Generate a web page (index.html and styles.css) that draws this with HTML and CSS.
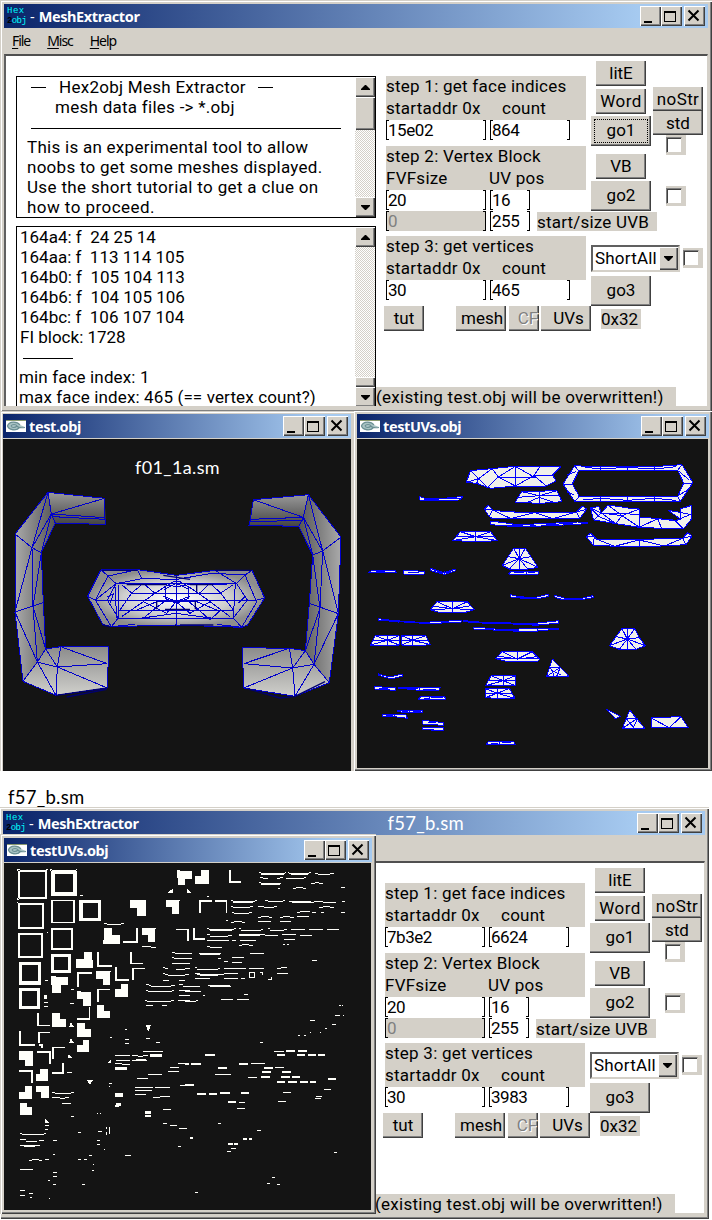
FILE: index.html
```
<!DOCTYPE html>
<html lang="en">
<head>
<meta charset="utf-8">
<title>MeshExtractor</title>
<link rel="stylesheet" href="styles.css">
</head>
<body>
<svg class="defs" width="0" height="0">
  <symbol id="min" viewBox="0 0 21 20"><path d="M4 15h8v2H4z"/></symbol>
  <symbol id="max" viewBox="0 0 21 20"><path fill-rule="evenodd" d="M3 5h12v11H3zM4 7h10v8H4z"/></symbol>
  <symbol id="close" viewBox="0 0 21 20"><path fill="none" stroke="#000" stroke-width="2" d="M4.500 4.500l10 10M14.500 4.500l-10 10"/></symbol>
  <symbol id="eye" viewBox="0 0 20 12"><path fill="#fff" d="M0 0h20v12H0z"/><path fill="#8a9a70" d="M0 0h20v1H0z"/><path fill="#a9c3c4" d="M1 6c2-5 10-5 13-1l5 2-5 1c-4 4-11 3-13-2z"/><path fill="none" stroke="#6b8f93" stroke-width="1.200" d="M14 5C11 1 3 1 1.500 6 3 10 10 11 13 8M5 6c1-2 5-2 6 0s4 2 8 1.500M5 6c1 2 4 2 6 0"/></symbol>
  <symbol id="up" viewBox="0 0 9 5"><path d="M4 0h1l4 4v1H0V4z"/></symbol>
  <symbol id="down" viewBox="0 0 9 5"><path d="M0 0h9v1L5 5H4L0 1z"/></symbol>
</svg>

<main class="desktop">
  <section class="window main first">
    <header class="titlebar">
      <span class="logo"><span class="hexa">Hex</span><span><i>2</i>obj</span></span>
      <h1 class="title"><span class="dash">-</span> MeshExtractor</h1>
      <div class="caption"><span class="cap"><svg><use href="#min"/></svg></span><span class="cap"><svg><use href="#max"/></svg></span><span class="cap last"><svg><use href="#close"/></svg></span></div>
    </header>
    <nav class="menu"><span><u>F</u>ile</span><span><u>M</u>isc</span><span><u>H</u>elp</span></nav>
    <div class="client">
      <div class="texts">
        <div class="textbox info">
          <div class="lines">
            <p class="l1"><b class="em"></b><span>Hex2obj Mesh Extractor</span><b class="em"></b></p>
            <p class="l2">mesh data files -&gt; *.obj</p>
            <p><b class="rule long"></b></p>
            <p class="t4">This is an experimental tool to allow</p>
            <p class="t5">noobs to get some meshes displayed.</p>
            <p class="t6">Use the short tutorial to get a clue on</p>
            <p class="t7">how to proceed.</p>
          </div>
          <div class="scroll"><span class="sb"><svg><use href="#up"/></svg></span><span class="thumb"></span><span class="sb end"><svg><use href="#down"/></svg></span></div>
        </div>
        <div class="textbox log">
          <div class="lines">
            <p>164a4: f&nbsp; 24 25 14</p><p>164aa: f&nbsp; 113 114 105</p><p>164b0: f&nbsp; 105 104 113</p><p>164b6: f&nbsp; 104 105 106</p><p>164bc: f&nbsp; 106 107 104</p><p>FI block: 1728</p>
            <p><b class="rule short"></b></p>
            <p class="minf">min face index: 1</p><p class="maxf">max face index: 465 (== vertex count?)</p>
          </div>
          <div class="scroll"><span class="sb"><svg><use href="#up"/></svg></span><span class="thumb low"></span><span class="sb"><svg><use href="#down"/></svg></span></div>
        </div>
      </div>
      <div class="controls">
        <div class="top">
          <div class="steps">
            <div class="step"><p class="s1">step 1: get face indices</p><p class="addr"><span>startaddr 0x</span><span>count</span></p></div>
            <div class="fields"><span class="field">15e02</span><span class="field mid">864</span></div>
            <div class="step two"><p class="s2">step 2: Vertex Block</p><p class="fvf"><span>FVFsize</span><span>UV pos</span></p></div>
            <div class="fields"><span class="field">20</span><span class="field small">16</span></div>
            <div class="fields second"><span class="field off">0</span><span class="field small">255</span><span class="tag uvb">start/size UVB</span></div>
            <div class="step three"><p class="s3">step 3: get vertices</p><p class="addr"><span>startaddr 0x</span><span>count</span></p></div>
            <div class="fields"><span class="field">30</span><span class="field mid">465</span></div>
          </div>
          <div class="actions">
            <span class="btn">litE</span><span class="btn word">Word</span><span class="btn go g1 focus">go1</span><span class="btn vb">VB</span><span class="btn go g2">go2</span>
            <span class="select"><span>ShortAll</span><span class="drop"><svg><use href="#down"/></svg></span></span>
            <span class="btn go g3">go3</span>
          </div>
          <div class="side"><span class="btn nostr">noStr</span><span class="btn std">std</span><span class="check c1"><i></i></span><span class="check c2"><i></i></span><span class="check c3"><i></i></span></div>
        </div>
        <div class="bottom"><span class="btn tut">tut</span><span class="btn mesh">mesh</span><span class="btn cf">CF</span><span class="btn uvs">UVs</span><span class="tag hex">0x32</span></div>
        <p class="tag note">(existing test.obj will be overwritten!)</p>
      </div>
    </div>
  </section>

  <section class="window view test">
    <header class="titlebar">
      <svg class="eye"><use href="#eye"/></svg><h2 class="title">test.obj</h2>
      <div class="caption"><span class="cap"><svg><use href="#min"/></svg></span><span class="cap"><svg><use href="#max"/></svg></span><span class="cap last"><svg><use href="#close"/></svg></span></div>
    </header>
    <svg class="canvas" viewBox="9 -3 1044 996" width="348" height="332">
      <defs>
        <linearGradient id="gl" x1="0" x2="1" y1="0" y2="0"><stop offset="0" stop-color="#aaa"/><stop offset="1" stop-color="#555"/></linearGradient>
        <linearGradient id="gr" x1="1" x2="0" y1="0" y2="0"><stop offset="0" stop-color="#aaa"/><stop offset="1" stop-color="#555"/></linearGradient>
        <linearGradient id="gd" x1="0" x2="0" y1="0" y2="1"><stop offset="0" stop-color="#999"/><stop offset="1" stop-color="#444"/></linearGradient>
        <linearGradient id="gb" x1="0" x2="0" y1="0" y2="1"><stop offset="0" stop-color="#8b8b8b"/><stop offset="1" stop-color="#d0d0cc"/></linearGradient>
        <radialGradient id="gc"><stop offset="0" stop-color="#fff"/><stop offset=".6" stop-color="#cfcfcf"/><stop offset="1" stop-color="#8d8d8d"/></radialGradient>
      </defs>
      <path fill="url(#gl)" d="M144 157L45 282V516L69 724L112 666L137 627L130 488L124 338L166 250L154 222z"/>
      <path fill="url(#gd)" d="M144 157L314 175L317 253L166 250L154 222z"/>
      <path fill="url(#gb)" d="M137 627L182 620L326 621L322 744L168 766L69 724L112 666z"/>
      <path fill="url(#gr)" d="M925 164L1023 291L1015 521L988 728L942 673L916 632L928 490L938 345L896 259L910 232z"/>
      <path fill="url(#gd)" d="M925 164L760 179L747 256L896 259L910 232z"/>
      <path fill="url(#gb)" d="M916 632L868 625L727 623L731 744L885 769L988 728L942 673z"/>
      <path fill="url(#gc)" d="M303 389L412 389L530 406L645 391L756 391L794 474L742 556L725 562L528 555L334 560L308 553L263 469z"/>
      <g fill="none" stroke="#0000cd" stroke-width="3" shape-rendering="crispEdges">
        <path d="M144 157L314 175V232L317 253L166 250L124 338L130 488L137 627L182 620L326 621L322 744L168 766L69 724L45 516V282zM144 157L154 222L314 175M154 222L314 233M154 222L166 250M154 222L96 323L144 157M154 222L124 338L96 323L45 282M96 323L45 516L130 488M96 323L99 500L112 666L137 627L172 681L322 671L182 620L172 681L168 766L112 666L69 724M99 500L137 627M45 516L112 666M172 681L322 744M112 666L172 681M158 230L317 238M124 338L99 500"/>
        <path d="M925 164L760 179L751 238L747 256L896 259L938 345L928 490L916 632L868 625L727 623L731 744L885 769L988 728L1015 521L1023 291zM925 164L910 232L760 179M910 232L751 238M910 232L896 259M910 232L968 333L925 164M910 232L938 345L968 333L1023 291M968 333L1015 521L928 490M968 333L960 505L942 673L916 632L878 684L731 671L868 625L878 684L885 769L942 673L988 728M938 345L960 505M1015 521L942 673L878 684L731 744M910 240L751 246M916 632L960 505"/>
        <path d="M303 389L412 389L530 406L645 391L756 391L794 474L742 556L725 562L528 555L334 560L308 553L263 469zM303 389L324 408L286 480L334 560L355 534L700 534L725 562L770 486L735 405L756 391M324 408L412 389L426 416L530 418L637 400L735 405L710 431L348 431L324 408M348 431L286 480L263 469M286 480H770L794 474M348 431L322 480L355 534M710 431L742 480L700 534M528 405V556M348 431L426 416M710 431L645 391M365 434L395 459L430 430L465 460L495 440M565 440L597 461L630 430L662 459L700 434M395 459H662M355 434V530M345 440L350 534M706 430L700 534M395 459L360 510H700L662 459M430 535L460 510L500 480M560 480L597 510L630 540L662 510M465 460L430 485M597 461L630 485M365 530L430 485L500 520L528 485L570 520L630 485L690 530"/>
        <path d="M495 440L520 425H540L565 440V475L530 490L495 475zM492 448L528 430L568 448M490 468L530 485L570 468M410 510L470 485H590L650 510M420 535L528 520L640 535M380 434L470 430L530 440L590 430L680 434M334 560L405 553M650 553L725 562M322 470L340 462L330 490M735 470L715 490"/>
      </g>
      <path fill="none" stroke="#000070" stroke-width="4" d="M168 766L322 744M200 771L320 748M745 747L840 774L885 769L975 725M306 391H412M645 391H755M490 406L570 418M380 434H500M570 434H640M590 436V455M470 484V508M586 484V508M495 508H570M308 555L330 560M540 555H640"/>
      <text class="label" x="405" y="101" textLength="254">f01_1a.sm</text>
    </svg>
  </section>

  <section class="window view uvs1">
    <header class="titlebar">
      <svg class="eye"><use href="#eye"/></svg><h2 class="title">testUVs.obj</h2>
      <div class="caption"><span class="cap"><svg><use href="#min"/></svg></span><span class="cap"><svg><use href="#max"/></svg></span><span class="cap last"><svg><use href="#close"/></svg></span></div>
    </header>
    <svg class="canvas" viewBox="3 -3 1053 987" width="351" height="329">
      <g fill="#f0f0eb" stroke="#00f" stroke-width="3" shape-rendering="crispEdges" stroke-linejoin="bevel">
        <path d="M331 127L343 92L408 86L475 79L614 80L590 105L600 123L571 138L478 138L404 145L362 130z"/>
        <path d="M497 155L603 152L618 185L555 190L477 187z"/>
        <path fill-rule="evenodd" d="M621 132L656 77L734 81L895 80L978 74L1011 128L973 184H656zM649 132L668 93L734 91L895 92L965 91L983 129L965 170L895 168L670 169z"/>
        <path d="M191 169L203 174L255 176L321 169L311 180L210 181H192z"/>
        <path d="M385 208L397 196L410 210L445 215L534 218L662 216L680 198L692 207L673 234L600 236L534 237L408 235L400 230z"/>
        <path d="M404 245H420L470 252L534 252L665 246H694V251L620 255L535 259L450 258L404 254z"/>
        <path d="M313 275H404L424 302L372 305L290 302z"/>
        <path d="M473 325H508L546 382L515 387H460L439 376z"/>
        <path d="M38 398L50 390H116L122 399zM143 391L205 394V402H143zM223 385L265 398L298 387L300 392L266 403L223 392zM458 402L466 394H546V402z"/>
        <path d="M463 464L490 470L534 473L576 463V470L540 477L500 475L464 471zM596 466L625 474L680 474L711 467V473L675 479L620 479L597 472z"/>
        <path d="M703 203L729 200L736 219L756 195L817 204L850 207V231L940 239L960 241L975 238L936 211L973 217V207L1007 196L1008 235L982 267L936 266L850 262L780 251L713 240z"/>
        <path d="M691 290L704 279L721 297L850 298L980 295L995 278L1008 288L990 314L920 318L780 319L711 315z"/>
        <path d="M243 485H334L355 509L325 518L245 516L223 509z"/>
        <path d="M67 536L116 542L190 547L256 545L316 540V546L258 549L190 549L67 541zM323 542L390 548L465 549L530 551L608 542V549L538 556L510 553L390 550L323 545zM353 561L418 567H490L608 564V567L545 573L470 573L353 567z"/>
        <path d="M58 587H129V615H43zM137 587H209L223 614L170 618L137 615z"/>
        <path d="M798 566H836L850 593L868 617L840 628H790L760 617L780 590z"/>
        <path d="M438 635H529L551 657L545 664L450 664L418 656z"/>
        <path d="M589 657L639 709H572z"/>
        <path d="M405 707H478V737H389zM389 746L460 745L477 775L430 777L389 772z"/>
        <path d="M67 701L85 707L101 711L140 702V708L105 717L68 706zM55 740L118 743V751L85 749L55 747zM126 741L190 743L253 743L249 751L190 751L127 744zM187 777L195 769H265L270 777z"/>
        <path d="M125 810L200 812V817L165 819L125 815zM79 824H150L154 835L115 830H79zM200 841L263 848V856L200 852zM200 863H262V873L200 868zM391 913L397 905H474L478 913z"/>
        <path d="M751 808L794 829L778 836zM821 810L866 865H799zM887 833L975 830L997 863H887z"/>
      </g>
      <g fill="none" stroke="#00f" stroke-width="3" shape-rendering="crispEdges">
        <path d="M343 92L368 116L331 127M362 130L368 116L408 86L427 111L394 143L368 116M427 111L478 79V138L427 111H534L478 79M478 138L534 107L550 82M590 105L534 107L571 138"/>
        <path d="M497 155L550 167L603 152M550 152V190M485 172L550 167L609 168M515 187L550 172L595 188"/>
        <path d="M621 132H649M656 77L668 93M978 74L965 91M983 129H1011M656 184L670 169M973 184L965 170M734 81V91M815 80V91M895 80V92M734 169V183M815 169V183M895 169V183M632 105L660 95M632 155L655 165M680 80L730 87L815 82L895 87L960 80M680 180L734 175L815 181L895 175L960 181M970 95L1000 120M970 165L1002 145"/>
        <path d="M203 177H250M262 176H311M385 208H410L400 230M410 210L465 236L534 218M536 218L590 236L662 216L670 234M662 216L690 208M440 256H500M570 254L650 250M623 251V258M450 251L540 256"/>
        <path d="M313 275L359 290L404 275M359 275V305M302 289H413M290 302L359 290L424 302M473 325L490 356L508 325M490 325V387M455 350L490 356L525 350M439 376L490 356L546 382M460 387L490 356L515 387"/>
        <path d="M60 395H84M90 396H112M86 390V399M155 397H190M265 394V402M475 398H505M510 393V402M515 397H538M630 477H680M485 472H525M235 390L260 399M270 399L290 391"/>
        <path d="M703 203L736 219L850 223M756 195L798 227L850 207M736 219L713 240M736 219L798 227L850 262M736 219L780 251L798 227M850 231V262M850 262L905 236L917 266M905 236L958 242L982 267M958 242L1007 222M973 217V240M973 217L1008 225M703 203L729 230L780 251"/>
        <path d="M691 290H715L711 315M721 297L775 319L850 300V319M850 300L925 318L980 295L990 314M980 295L1008 288"/>
        <path d="M289 485V518M243 485L289 506L334 485M232 499L289 506L345 497M223 509L289 506L355 509M128 540V548M256 542V549M100 541L190 547M391 546V553M463 546V553M510 554L550 552M412 564V573M545 566V573M425 570H490"/>
        <path d="M94 587V615M58 587L94 601L129 587M50 601H129M43 615L94 601L129 615M170 587V618M137 587L170 601L209 587M137 601H217M137 615L170 601L223 614"/>
        <path d="M814 567V628M798 566L814 597L836 566M780 590L814 597L850 593M760 617L814 597L868 617M790 628L814 597L840 628M484 635V660M438 635L484 657L529 635M425 648L484 657L542 650M418 656H551"/>
        <path fill="#00f" d="M811 593h7v8h-7z"/>
        <path d="M583 682H613L572 709M583 682L595 709M613 682L602 709M585 690L615 705M442 707V737M405 707L442 722L478 707M397 721H478M389 737L442 722L478 737M424 746V775M389 746L424 760L460 745M389 760H467M389 772L424 760L477 775"/>
        <path d="M70 745H95M150 744H185M190 743V751M200 748H240M203 774H218M221 769V777M226 773H260M137 813H155M160 810V818M170 815H195M90 827H110M115 823V832M215 847H240M215 868H235M405 910H425M430 905V913M437 908H465"/>
        <path d="M810 835H845L799 865M810 835L835 865M845 835L830 865M887 835L940 863L975 830"/>
      </g>
    </svg>
  </section>

  <p class="caption-label">f57_b.sm</p>

  <section class="window main second-win">
    <header class="titlebar">
      <span class="logo"><span class="hexa">Hex</span><span><i>2</i>obj</span></span>
      <h1 class="title"><span class="dash">-</span> MeshExtractor</h1>
      <span class="file">f57_b.sm</span>
      <div class="caption"><span class="cap"><svg><use href="#min"/></svg></span><span class="cap"><svg><use href="#max"/></svg></span><span class="cap last"><svg><use href="#close"/></svg></span></div>
    </header>
    <div class="menu"></div>
    <div class="client">
      <div class="texts"></div>
      <div class="controls">
        <div class="top">
          <div class="steps">
            <div class="step"><p class="s1">step 1: get face indices</p><p class="addr"><span>startaddr 0x</span><span>count</span></p></div>
            <div class="fields"><span class="field">7b3e2</span><span class="field mid">6624</span></div>
            <div class="step two"><p class="s2">step 2: Vertex Block</p><p class="fvf"><span>FVFsize</span><span>UV pos</span></p></div>
            <div class="fields"><span class="field">20</span><span class="field small">16</span></div>
            <div class="fields second"><span class="field off">0</span><span class="field small">255</span><span class="tag uvb">start/size UVB</span></div>
            <div class="step three"><p class="s3">step 3: get vertices</p><p class="addr"><span>startaddr 0x</span><span>count</span></p></div>
            <div class="fields"><span class="field">30</span><span class="field mid">3983</span></div>
          </div>
          <div class="actions">
            <span class="btn">litE</span><span class="btn word">Word</span><span class="btn go g1">go1</span><span class="btn vb">VB</span><span class="btn go g2">go2</span>
            <span class="select"><span>ShortAll</span><span class="drop"><svg><use href="#down"/></svg></span></span>
            <span class="btn go g3">go3</span>
          </div>
          <div class="side"><span class="btn nostr">noStr</span><span class="btn std">std</span><span class="check c1"><i></i></span><span class="check c2"><i></i></span><span class="check c3"><i></i></span></div>
        </div>
        <div class="bottom"><span class="btn tut">tut</span><span class="btn mesh">mesh</span><span class="btn cf">CF</span><span class="btn uvs">UVs</span><span class="tag hex">0x32</span></div>
        <p class="tag note">(existing test.obj will be overwritten!)</p>
      </div>
    </div>
  </section>

  <section class="window view uvs2">
    <header class="titlebar">
      <svg class="eye"><use href="#eye"/></svg><h2 class="title">testUVs.obj</h2>
      <div class="caption"><span class="cap"><svg><use href="#min"/></svg></span><span class="cap"><svg><use href="#max"/></svg></span><span class="cap last"><svg><use href="#close"/></svg></span></div>
    </header>
    <svg class="canvas" viewBox="12 9 1101 1041" width="367" height="347" shape-rendering="crispEdges">
      <g fill="#fffffa" fill-rule="evenodd">
        <path d="M54 30h87v87h-87zM60 36v75h75v-75zM51 27h9v6h-9zM138 27h6v3h-6zM51 114h6v6h-6zM153 30h78v78h-78zM165 42v54h54v-54zM150 27h6v6h-6zM228 27h3v6h-3zM54 129h78v78h-78zM60 135v66h66v-66zM153 120h72v69h-72zM159 123v63h60v-63zM237 120h66v63h-66zM249 129v45h45v-45zM54 219h75v75h-75zM60 225v63h63v-63zM153 204h66v66h-66zM159 210v54h54v-54zM153 282h60v57h-60zM162 291v39h42v-39zM57 306h66v69h-66zM66 315v48h48v-48zM57 384h63v63h-63zM66 393v45h45v-45z"/>
        <path d="M390 120h48v48h-27v-24h-21zM498 120h42v3h-3v39h-21v-21h-18zM531 30h9v3h36v24h-21v18h-21zM603 30h24v42h-42v-24h18zM312 204h24v21h24v27h-51v-12h3zM426 204h42v3h-3v39h-21v-21h-18zM252 276h24v24h3v24h-51v-27h24zM288 333h45v3h-3v39h-21v-18h-21zM153 348h15v3h36v24h-21v24h-27zM363 372h21v39h-39v-24h18zM231 393h12v3h30v42h-24v-21h-18zM291 435h21v18h18v21h-39zM156 459h24v18h18v24h-42zM231 489h24v18h18v24h-42zM249 540h18v36h-36v-21h18zM57 573h42v45h-24v-18h-18zM120 627h24v36h-36v-21h12zM75 678h21v39h-39v-21h18zM108 678h39v36h-24v-18h-15zM60 729h21v12h15v24h-36z"/>
        <path d="M207 501l6-15 3 6 6 9zM207 549l6-15 3 6 6 9zM261 660h18l-9 15zM438 495h15l-3 9-3 9h-3zM321 609l6-6 6-3v9zM135 789v-12l6 3 6 9zM204 585l9 3 3 6h-12zM504 99l6-9 9-3v12zM561 99v-12l12 9v3zM117 552h12v12h-6v-6h-6zM132 405h9v12h-9zM345 699h24v12h-24zM348 729h15v9h-6v3h-12v-6h3zM435 753h18v9h-18zM435 765h18v6h-18zM345 621h36v9h-36zM450 582h36v9h-36z"/>
      </g>
      <g fill="none" stroke="#fffffa" stroke-width="5">
        <path d="M411 204v42h-42M690 30v36h33M528 208h36v34M294 276v42h42M393 276v34h36M276 338h-42v43M348 321v38h39M435 325h-36v34M330 388h-36v38M268 441v36h-36M114 459v37h36M60 513v42h45M150 517h-33v32M111 576h38v36M195 562h-37v36M57 633h39v35M188 609v30h-32M600 160v-38h36M645 122h34v36M582 204v32h33"/>
      </g>
      <g fill="none" stroke="#fffffa" stroke-width="3">
        <path d="M240 106h9M51 127h3M141 217h3M312 190h9m0 2h42m0-2h9M426 260h27m0 3h15M135 361h9M213 388h9M210 430h12M132 427h12M132 439h12M201 637h15M516 278h9m0 3h45M516 292h6m0 3h42M516 310h54M489 323h6m0 3h9m24 3h28m0-3h14M489 340h6m0 3h9m0 3h51m0-3h9M489 361h18m30 0h18M438 374h9m0 3h6m0 3h60m0-3h12M438 392h6m0 3h72m0-3h6M537 374h12m0 4h21M537 392h33M537 407h33M435 422h6m0 3h73m0-4h9m10 0h37M438 437h21m42 0h-15M375 509h6M375 539h12M375 550h12M330 532h6M438 536h12M468 547h12M429 575h60M396 586h18m0 3h15m0-2h15M345 587h45M348 600h42M345 610h20m0 4h24M396 600h45M408 599h30M534 611h33M510 623h27M504 635h33M444 644h42M411 654h33M540 676h30M405 683h54m6 0h45M405 692h50M405 703h33M459 712h21m0-2h30M489 747h24M489 789h12M510 797h21m6 8h24M534 858h9M327 670h9M327 680h3M156 698h9m0 3h48m0-3h9M156 713h24m0 2h15m0-2h12M186 730h27M213 769h9M135 796h12M135 808h9M60 821h6m0 3h67m0-3h5M60 838h18m0 6h33m6-3h15M60 856h60M72 859h33M159 842h12M159 884h6M87 901h9m0-2h20m0 2h10M135 899h12M60 928h39M159 937h12M159 949h12M144 961h6M159 973h9M60 991h15M60 1006h15M87 1000h12M90 1012h6M147 1015h3M234 817h9M294 814h12M291 760h3m6 0h3M319 801v6m0 9v9M328 801v21M291 842h9M291 853h9M312 867h3M234 898h9m9 0h9M267 886h9M375 886h18M279 912h3M276 931h6M246 973h9M620 109h6"/>
        <g transform="translate(555 0)">
          <path d="M222 38h6m0 3h72m0-3h3m6 0h4m0 3h58m0-3h6m12 3h9m0 2h36m0-3h12M225 52h9m0 3h14m28 0h10m0-3h8m10 3h54m0-3h6M222 68h6m0 2h6m0 3h38m0-3h16m90 0h12m0-3h12m0 3h11M279 84h6m40 1h8m0-2h20m0 2h10M468 82h12M138 121h6m0 3h66m0-3h6m24 0h9m0 4h46m0-3h6m12 2h15m0 3h60m0-3h27m0 3h39m18-3h9M138 140h6m0 3h51m0-3h9m16-1h16m0 4h30m0-3h9m128 3h12m0-3h20m0 2h12M141 156h6m0 3h46m0-2h8M336 156h10m0-2h28M381 156h12m14 0h9M468 158h12M219 172h10m0-3h24m0 3h8m24 0h10m0-3h20m0 3h12M336 170h36M124 181h6M138 187h10m0-3h24m0 3h8m40-3h38M285 184h33M66 206h6m0 3h75m0-3h5m10 0h6m0 4h60m0-3h6m15-2h6m0 5h42m0-3h10m10 0h12m0 2h30m12 0h42m12 0h36M66 224h10m0 4h54m0-3h12m20-2h12m0 4h46m0-3h20m0 3h40m10-3h42m12 2h36M66 242h66m10-2h12m10 0h48m84-2h34M66 258h10m0 3h36m50-5h10m0-3h20m0 3h12M294 253h6m6 0h6M0 281h20m22-1h66m88-1h40M0 296h20m80-2h8m34-1h36M117 305h12m12 2h30M381 301h15M0 326h12m18-3h6m0 4h62m0-3h6m12 1h66m10-1h46M275 324h12m0-2h18M0 342h12m18-2h14m0 5h54m0-3h18m2-1h42M276 339h34M30 356h44m42 0h42m10-1h12M0 379h46m24-4h8m0 3h60M0 394h48M0 406h10m44 0h6M177 403h12M0 424h32m0-3h6m70-2h36m12 0h36M462 436h6m3 0h3M450 466h15m9 0h3M375 481h15M441 493h12M420 505h6M375 517h3m27 0h3M339 526h6m12 0h6M225 547h9M99 790h9M0 805h6M216 811h12M138 865h15M126 874h12M447 877h9M261 952h9M246 970h9M276 973h9M30 997h9M90 643h48M198 610h42M156 745h24M279 724h24M390 715h18M393 709h18M417 688h21M294 698h24M270 622h27M267 573h30"/>
          <path stroke-width="5" d="M228 43h70M318 43h50M228 71h58M145 126h60M320 125h58M387 124h24M75 211h65M168 211h55M162 225h64M45 281h60M117 325h60M35 343h64M35 328h60M75 377h60M60 585h30M303 573h27M339 573h27M276 585h24M336 585h24M369 585h24M399 585h21M0 611h12M18 611h30M162 612h27M99 624h27M237 624h27M231 636h27M291 636h27M189 652h27M228 651h27M288 651h27M321 651h24M276 666h24M309 666h27M345 666h24M375 666h18M429 657h24M0 674h27M36 701h27M72 701h24M105 699h30M168 699h24M129 726h24M162 727h18M129 852h15M147 852h12M174 836h12M15 833h9M192 836h9"/>
          <path d="M194 338h14v14h-14zM224 338h8v8M250 357h9v-6"/>
        </g>
      </g>
    </svg>
  </section>
</main>
</body>
</html>
```

FILE: styles.css
```
* { box-sizing: border-box; }
body { margin: 0; background: #fff; }
p, h1, h2 { margin: 0; font: inherit; white-space: pre; }
.defs { position: absolute; }
.desktop { position: relative; width: 712px; height: 1220px; overflow: hidden; font: 17px/20px Roboto, sans-serif; color: #000; }

/* windows */
.window { position: absolute; display: flex; flex-direction: column; background: #d4d0c8; box-shadow: inset 1px 1px #d4d0c8, inset 2px 2px #fff, inset -1px -1px #404040, inset -2px -2px #808080; }
.first { left: 0; top: 0; width: 712px; height: 412px; padding: 4px 4px 0; }
.second-win { left: -1px; top: 807px; width: 710px; height: 412px; padding: 4px 4px 0; }
.test { left: 0; top: 411px; width: 354px; height: 360px; padding: 3px 3px 0; box-shadow: inset 1px 1px #d4d0c8, inset 2px 2px #fff; }
.uvs1 { left: 354px; top: 411px; width: 358px; height: 360px; padding: 3px; box-shadow: inset 1px 1px #fff, inset -1px -1px #404040, inset -2px -2px #808080; }
.uvs2 { left: 0; top: 834px; width: 376px; height: 380px; padding: 4px; border-left: 0; }
.titlebar { display: flex; align-items: center; flex: none; height: 24px; background: linear-gradient(90deg, #0a246a, #a6caf0 90%); padding-right: 3px; margin-bottom: 1px; }
.main .titlebar { margin-bottom: 0; }
.title { color: #fff; font: bold 14.500px/24px "Noto Sans", "DejaVu Sans", sans-serif; letter-spacing: -.4px; }
.dash { font-weight: normal; margin-right: 1px; }
.logo { width: 19px; margin: 0 4px 0 3px; display: flex; flex-direction: column; color: #00ffff; font: 9px/10px "Liberation Mono", monospace; letter-spacing: -.6px; }
.logo .hexa { letter-spacing: .5px; }
.logo i { color: #000; font-style: normal; font-weight: bold; }
.eye { width: 20px; height: 12px; margin: 0 3px; }
.caption { margin-left: auto; display: flex; }
.cap, .btn, .sb, .thumb, .drop { background: #d4d0c8; box-shadow: inset 1px 1px #fff, inset -1px -1px #404040, inset -2px -2px #808080; }
.cap { width: 21px; height: 20px; }
.cap svg { display: block; width: 21px; height: 20px; }
.cap.last { margin-left: 2px; }
.menu { display: flex; gap: 17px; height: 26px; flex: none; padding-left: 8px; font: 14px/26px "Noto Sans", sans-serif; letter-spacing: -1.050px; }
.menu u { text-underline-offset: 2px; }
.client { display: flex; height: 352px; border-left: 2px solid #606060; border-top: 2px solid #505050; border-right: 1px solid #d4d0c8; background: #fff; overflow: hidden; }
.canvas { display: block; background: #141414; flex: none; }
.label { font: 54px Lato, sans-serif; fill: #fff; }
.caption-label { position: absolute; left: 8px; top: 787px; font: 18.500px/20px Lato, sans-serif; letter-spacing: .25px; }
.file { margin-left: 249px; color: #fff; font: 18.500px/24px Lato, sans-serif; letter-spacing: .25px; }

/* text boxes */
.texts { width: 370px; flex: none; padding: 20px 0 0 10px; display: flex; flex-direction: column; gap: 8px; }
.textbox { width: 360px; display: flex; border: 1px solid #000; }
.info { height: 142px; letter-spacing: .27px; }
.log { height: 200px; flex: none; border-bottom: 0; }
.lines { flex: 1; }
.lines p { height: 20px; }
.l1 { display: flex; align-items: center; padding-left: 14px; }
.em { width: 15px; height: 1px; background: #000; }
.l1 span { margin: 0 12px 0 13px; width: 187px; }
.l2 { padding-left: 38px; }
.rule { display: block; height: 1px; background: #000; }
.long { margin-left: 14px; width: 310px; position: relative; top: 11px; }
.short { margin-left: 3px; width: 50px; position: relative; top: 11px; }
.t4, .t5, .t6, .t7 { padding-left: 10px; }
.t6 { letter-spacing: .34px; }
.t7 { letter-spacing: .45px; }
.log p { padding-left: 3px; }
.log .minf, .log .maxf { padding-left: 2px; letter-spacing: .13px; }
.scroll { width: 20px; display: flex; flex-direction: column; background: repeating-conic-gradient(#fff 0 25%, #d4d0c8 0 50%) 0 0 / 2px 2px; }
.sb { height: 20px; display: flex; align-items: center; justify-content: center; flex: none; }
.sb svg, .drop svg { width: 9px; height: 5px; }
.sb.end { margin-top: auto; }
.thumb { height: 33px; }
.thumb.low { margin-top: 130px; height: 10px; }
.log .sb { height: 20px; }

/* control panel */
.controls { display: flex; flex-direction: column; width: 328px; }
.top { display: flex; height: 250px; }
.steps { width: 200px; margin-left: 10px; padding-top: 20px; }
.step { width: 200px; height: 44px; background: #d4d0c8; display: flex; flex-direction: column; gap: 1px; letter-spacing: .25px; }
.step p { height: 21px; line-height: 21px; }
.two { margin-top: 6px; }
.three { margin-top: 5px; }
.addr, .fvf { display: flex; }
.addr span:first-child { width: 116px; }
.fvf span:first-child { width: 103px; }
.fields { display: flex; gap: 4px; height: 20px; }
.second { margin-top: 1px; }
.field { width: 100px; flex: none; padding-left: 1px; height: 20px; background: linear-gradient(#000, #000) 0 0 / 2px 1px no-repeat, linear-gradient(#000, #000) 0 100% / 2px 1px no-repeat, linear-gradient(#000, #000) 100% 0 / 2px 1px no-repeat, linear-gradient(#000, #000) 100% 100% / 2px 1px no-repeat; border-left: 1px solid #000; border-right: 1px solid #000; letter-spacing: -.45px; }
.mid { width: 80px; }
.small { width: 40px; }
.off { background-color: #d4d0c8; color: #808080; }
.tag { background: #d4d0c8; flex: none; white-space: pre; padding-left: 0; }
.uvb { width: 120px; margin: 1px 0 0 3px; letter-spacing: .2px; }
.actions { display: flex; flex-direction: column; width: 89px; margin-left: 5px; padding: 5px 0 0 5px; }
.btn { width: 50px; height: 25px; display: flex; justify-content: center; line-height: 24px; flex: none; white-space: pre; overflow: hidden; box-shadow: inset -1px -1px #404040, inset -2px -2px #808080; }
.word { margin-top: 3px; letter-spacing: .4px; }
.go { width: 60px; height: 30px; line-height: 29px; margin-left: -5px; }
.g1 { margin-top: 2px; }
.focus { outline: 1px dotted #000; outline-offset: -4px; }
.vb { margin-top: 8px; }
.g2 { margin-top: 2px; }
.select { width: 89px; height: 27px; margin: 34px 0 0 -5px; display: flex; flex: none; border: 2px solid #d4d0c8; border-left-color: #606060; border-top-color: #606060; line-height: 23px; padding-left: 2px; }
.select > span:first-child { width: 64px; overflow: hidden; letter-spacing: .2px; }
.drop { width: 19px; display: flex; align-items: center; justify-content: center; flex: none; }
.g3 { margin-top: 4px; }
.side { position: relative; z-index: 1; width: 50px; display: flex; flex-direction: column; padding-top: 31px; margin-left: -27px; }
.nostr, .std { height: 24px; }
.nostr { letter-spacing: .4px; }
.check { width: 20px; height: 20px; background: #d4d0c8; flex: none; margin-left: 13px; padding-top: 2px; }
.check i { display: block; width: 16px; height: 16px; background: #fff; border: 1px solid #808080; border-right-color: #d4d0c8; border-bottom-color: #d4d0c8; box-shadow: inset 1px 1px #404040; }
.c2 { margin-top: 31px; }
.c3 { margin: 42px 0 0 30px; }
.bottom { display: flex; height: 25px; padding-left: 8px; }
.tut { width: 40px; }
.mesh { margin-left: 32px; padding-left: 2px; }
.cf { width: 30px; margin-left: 3px; color: #808080; text-shadow: 1px 1px #fff; padding-left: 8px; }
.uvs { margin-left: 2px; padding-left: 5px; }
.hex { width: 40px; height: 20px; margin: 3px 0 0 10px; }
.note { width: 300px; height: 20px; margin-top: 56px; letter-spacing: .26px; }
```
